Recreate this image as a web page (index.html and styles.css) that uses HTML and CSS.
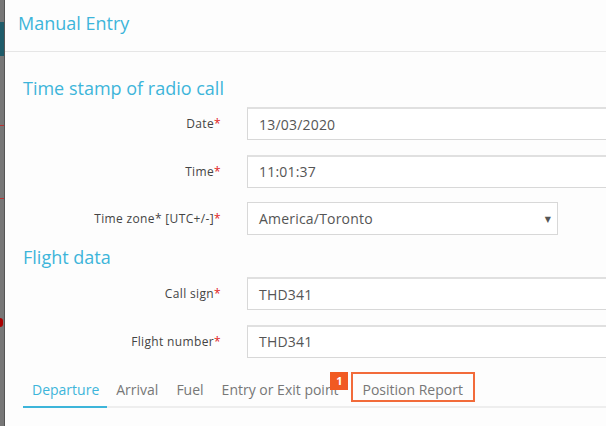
FILE: index.html
```html
<!DOCTYPE html>
<html>
<head>
<meta charset="utf-8">
<link rel="stylesheet" href="styles.css">
</head>
<body>
<div class="page">
  <div class="backdrop">
    <span class="bd-teal"></span>
    <span class="bd-red bd-red1"></span>
    <span class="bd-red bd-red2"></span>
    <span class="bd-dot"></span>
  </div>
  <div class="modal">
    <div class="modal-header">Manual Entry</div>
    <div class="modal-body">
      <h2 class="section-title">Time stamp of radio call</h2>
      <div class="fields">
        <div class="row">
          <label class="label">Date<span class="req">*</span></label>
          <div class="input">13/03/2020</div>
        </div>
        <div class="row">
          <label class="label">Time<span class="req">*</span></label>
          <div class="input">11:01:37</div>
        </div>
        <div class="row">
          <label class="label">Time zone* [UTC+/-]<span class="req">*</span></label>
          <div class="input select">America/Toronto<span class="caret">▼</span></div>
        </div>
      </div>
      <h2 class="section-title second">Flight data</h2>
      <div class="fields">
        <div class="row">
          <label class="label">Call sign<span class="req">*</span></label>
          <div class="input">THD341</div>
        </div>
        <div class="row">
          <label class="label">Flight number<span class="req">*</span></label>
          <div class="input">THD341</div>
        </div>
      </div>
      <div class="tabs">
        <div class="tab active">Departure</div>
        <div class="tab">Arrival</div>
        <div class="tab">Fuel</div>
        <div class="tab">Entry or Exit point</div>
        <div class="tab highlighted">Position Report<span class="badge">1</span></div>
      </div>
    </div>
  </div>
</div>
</body>
</html>
```
FILE: styles.css
```css
* { box-sizing: border-box; }
html, body { margin: 0; padding: 0; }
body {
  width: 606px;
  height: 426px;
  overflow: hidden;
  background: #fdfdfd;
  font-family: "Open Sans", "DejaVu Sans", sans-serif;
}
.page {
  display: flex;
  height: 426px;
}
.backdrop {
  position: relative;
  width: 5px;
  flex: 0 0 5px;
  background: #777;
  border-right: 1px solid #555;
}
.bd-teal { position: absolute; left: 0; top: 22px; width: 4px; height: 34px; background: #1f5c6a; }
.bd-red { position: absolute; left: 0; width: 4px; height: 1px; background: #b33; }
.bd-red1 { top: 125px; }
.bd-red2 { top: 198px; }
.bd-dot { position: absolute; left: 0; top: 318px; width: 3px; height: 9px; background: #a00; border-radius: 0 4px 4px 0; }
.modal {
  width: 640px;
  flex: 0 0 640px;
  background: #fdfdfd;
}
.modal-header {
  height: 52px;
  border-bottom: 1px solid #e6e6e6;
  padding: 10px 0 0 13px;
  font-size: 18px;
  line-height: 26px;
  color: #3db5da;
}
.modal-body {
  padding: 24px 0 0 18px;
}
.section-title {
  margin: 0 0 7px 0;
  font-weight: normal;
  font-size: 18px;
  line-height: 24px;
  color: #3db5da;
}
.section-title.second { margin: 10px 0 8px 0; }
.fields {
  display: flex;
  flex-direction: column;
  gap: 14.5px;
}
.row {
  display: flex;
  align-items: center;
}
.label {
  width: 198px;
  flex: 0 0 198px;
  text-align: right;
  font-size: 12px;
  letter-spacing: 0.35px;
  color: #444;
}
.req { color: #e02020; }
.input {
  margin-left: 26px;
  flex: 1;
  height: 33px;
  border: 1px solid #d8d8d8;
  border-top: 2px solid #e0e0e0;
  background: #fff;
  padding: 0 0 0 11px;
  display: flex;
  align-items: center;
  font-size: 14px;
  letter-spacing: 0.2px;
  color: #555;
}
.input.select {
  flex: 0 0 311px;
  justify-content: space-between;
  padding-right: 6px;
  border-top: 1px solid #d8d8d8;
}
.caret { font-size: 8px; color: #555; }
.tabs {
  display: flex;
  align-items: flex-start;
  margin-top: 12.5px;
  border-bottom: 2px solid #eeeeee;
  width: 583px;
  height: 38px;
}
.tab {
  position: relative;
  height: 38px;
  padding: 10px 9px 0 9px;
  font-size: 14px;
  line-height: 20px;
  color: #777;
  border-bottom: 2px solid transparent;
}
.tab.active {
  padding-right: 8px;
  color: #3db5da;
  border-bottom-color: #3db5da;
}
.tab.highlighted {
  margin-top: 2px;
  margin-left: 4px;
  height: 30px;
  padding: 6px 10px 0 9px;
  border: 2px solid #f26b3a;
}
.badge {
  position: absolute;
  left: -23px;
  top: -2px;
  width: 18px;
  height: 18px;
  background: #f15a22;
  color: #fff;
  font-size: 11px;
  font-weight: bold;
  letter-spacing: 0;
  text-align: center;
  line-height: 18px;
}
```
